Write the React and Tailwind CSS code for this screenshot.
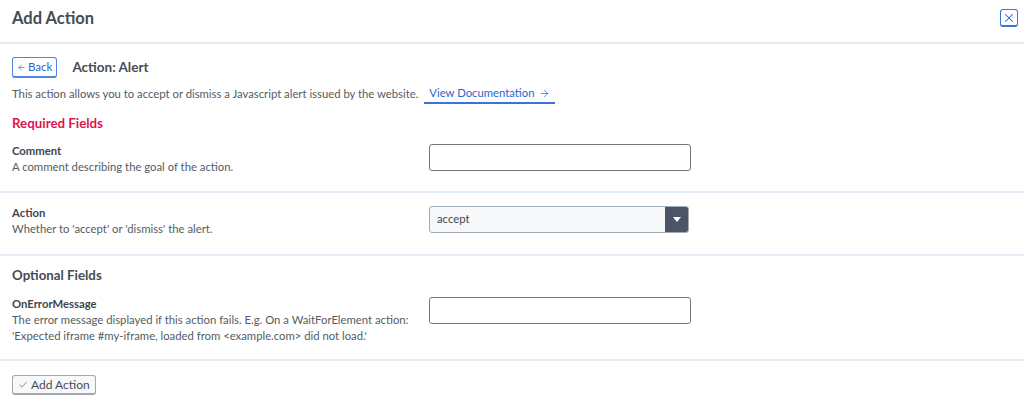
import { ArrowLeft, ArrowRight, Check, X } from 'lucide-react'

const font = { fontFamily: 'Lato, "Noto Sans", sans-serif' }

function FieldRow({ label, children, control, className = '' }) {
  return (
    <div className={`flex items-start px-3 ${className}`}>
      <div className="w-[417px] shrink-0">
        <div className="text-[11.3px] font-bold leading-4 text-[#3f454d]">{label}</div>
        <div className="text-[11.3px] leading-4 text-[#555b63]">{children}</div>
      </div>
      <div className="pt-px">{control}</div>
    </div>
  )
}

function TextInput() {
  return <div className="h-[27px] w-[262px] rounded-[3px] border border-[#777] bg-white" />
}

function SelectBox() {
  return (
    <div className="flex h-[27px] w-[260px] overflow-hidden rounded-[3px] border border-[#a4aab2] bg-[#f7f8fa]">
      <div className="flex flex-1 items-center px-[7px] text-[11.3px] text-[#3f454d]">accept</div>
      <div className="flex w-[23px] items-center justify-center bg-[#4b5565]">
        <svg width="8" height="5" viewBox="0 0 8 5">
          <path d="M0 0h8L4 5z" fill="#fff" />
        </svg>
      </div>
    </div>
  )
}

export default function App() {
  return (
    <div className="h-[401px] w-[1024px] overflow-hidden bg-white" style={font}>
      <header className="flex h-[44px] items-center justify-between border-b-2 border-[#e2ecf6] pb-[6px] pl-3 pr-[6px]">
        <h1 className="text-[16.5px] font-bold text-[#464c55]">Add Action</h1>
        <button className="flex h-[18px] w-[18px] items-center justify-center rounded-[3px] border border-[#3b74d9] border-b-2 bg-white text-[#2f63c9]">
          <X size={14} strokeWidth={1.8} />
        </button>
      </header>

      <div className="px-3">
        <div className="mt-[13px] flex items-center gap-[15px]">
          <button className="flex h-[21px] items-center gap-[2px] rounded-[3px] border border-[#4f86e6] border-b-2 bg-white px-[4px] text-[11.5px] text-[#2f66d0]">
            <ArrowLeft size={9} strokeWidth={1.8} />
            Back
          </button>
          <span className="text-[13.5px] font-bold text-[#464c55]">Action: Alert</span>
        </div>

        <div className="mt-[6px] flex items-center text-[11.3px] leading-4 text-[#555b63]">
          <span>This action allows you to accept or dismiss a Javascript alert issued by the website.</span>
          <a className="ml-[6px] mt-px flex items-center gap-[5px] border-b-2 border-[#3b74d9] px-[5px] pb-px text-[#2f63c9]">
            View Documentation
            <ArrowRight size={11} strokeWidth={1.6} />
          </a>
        </div>

        <div className="mt-[10px] text-[13.3px] font-bold leading-[18px] text-[#e0134f]">Required Fields</div>
      </div>

      <FieldRow label="Comment" control={<TextInput />} className="mt-[11px] pb-[16px]">
        A comment describing the goal of the action.
      </FieldRow>
      <div className="h-[2px] bg-[#e2ecf6]" />

      <FieldRow label="Action" control={<SelectBox />} className="pt-[12px] pb-[17px]">
        Whether to 'accept' or 'dismiss' the alert.
      </FieldRow>
      <div className="h-[2px] bg-[#e2ecf6]" />

      <div className="px-3 pt-[10px] text-[13.3px] font-bold leading-[18px] text-[#464c55]">Optional Fields</div>

      <FieldRow label="OnErrorMessage" control={<TextInput />} className="mt-[12px] pb-[15px]">
        The error message displayed if this action fails. E.g. On a WaitForElement action:
        <br />
        'Expected iframe #my-iframe, loaded from &lt;example.com&gt; did not load.'
      </FieldRow>
      <div className="h-[2px] bg-[#e2ecf6]" />

      <div className="px-3 pt-[14px]">
        <button className="flex h-5 items-center gap-[3px] rounded-[3px] border border-[#a3a8ae] border-b-2 bg-[#f7f8f9] px-[5px] text-[12px] text-[#464c55]">
          <Check size={10} strokeWidth={1.6} />
          Add Action
        </button>
      </div>
    </div>
  )
}
